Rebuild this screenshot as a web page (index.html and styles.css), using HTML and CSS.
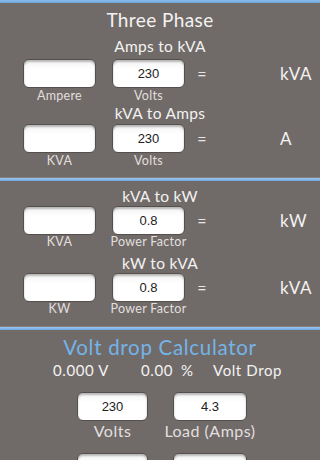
FILE: index.html
```html
<!DOCTYPE html>
<html>
<head>
<meta charset="utf-8">
<link rel="stylesheet" href="styles.css">
</head>
<body>
<div class="topbar"></div>
<section class="panel p1">
  <h1 class="title">Three Phase</h1>
  <h2 class="sub">Amps to kVA</h2>
  <div class="row">
    <div class="box"></div>
    <div class="box">230</div>
    <div class="eq">=</div>
    <div class="unit">kVA</div>
  </div>
  <div class="labels"><span>Ampere</span><span>Volts</span></div>
  <h2 class="sub s2">kVA to Amps</h2>
  <div class="row r2">
    <div class="box"></div>
    <div class="box">230</div>
    <div class="eq">=</div>
    <div class="unit">A</div>
  </div>
  <div class="labels"><span>KVA</span><span>Volts</span></div>
</section>
<div class="sep s1"></div>
<section class="panel p2">
  <h2 class="sub">kVA to kW</h2>
  <div class="row r3">
    <div class="box"></div>
    <div class="box">0.8</div>
    <div class="eq">=</div>
    <div class="unit">kW</div>
  </div>
  <div class="labels l0"><span>KVA</span><span>Power Factor</span></div>
  <h2 class="sub s3">kW to kVA</h2>
  <div class="row r3">
    <div class="box"></div>
    <div class="box">0.8</div>
    <div class="eq">=</div>
    <div class="unit">kVA</div>
  </div>
  <div class="labels l0"><span>KW</span><span>Power Factor</span></div>
</section>
<div class="sep s2"></div>
<section class="panel p3">
  <h1 class="vtitle">Volt drop Calculator</h1>
  <div class="stats"><span class="v">0.000 V</span><span class="pc">0.00</span><span class="pct">%</span><span class="vd">Volt Drop</span></div>
  <div class="vrow">
    <div class="box vb">230</div>
    <div class="box vb wide">4.3</div>
  </div>
  <div class="vlabels"><span>Volts</span><span class="wide">Load (Amps)</span></div>
  <div class="vrow vr2">
    <div class="box vb"></div>
    <div class="box vb wide"></div>
  </div>
</section>
</body>
</html>
```
FILE: styles.css
```css
html, body {
  margin: 0;
  padding: 0;
}
body {
  width: 320px;
  height: 460px;
  overflow: hidden;
  background: #706b69;
  font-family: "Lato", "DejaVu Sans", sans-serif;
  color: #f4f2f1;
}
.topbar {
  height: 3px;
  background: linear-gradient(#8cbcec, #6ea4dc);
}
.panel {
  display: flex;
  flex-direction: column;
}
.title {
  margin: 7px 0 0;
  height: 20px;
  line-height: 20px;
  font-size: 19px;
  font-weight: 400;
  text-align: center;
  letter-spacing: 0.4px;
}
.sub {
  margin: 7px 0 0;
  height: 18px;
  line-height: 18px;
  font-size: 15.5px;
  font-weight: 400;
  text-align: center;
  letter-spacing: 0.3px;
}
.p1 .sub.s2 { margin-top: 1px; }
.row {
  display: flex;
  align-items: center;
  padding-left: 23px;
  margin-top: 4px;
  height: 29px;
}
.row.r2 { margin-top: 2px; }
.row.r3 { margin-top: 1px; }
.row .box { width: 73px; }
.row .box + .box { margin-left: 16px; }
.box {
  box-sizing: border-box;
  height: 29px;
  background: linear-gradient(#f3f3f3, #ffffff 35%);
  border: 1px solid #55504e;
  border-radius: 6px;
  box-shadow: inset 0 2px 2px rgba(0,0,0,0.25);
  font-family: "Liberation Sans", Arial, sans-serif;
  font-size: 13px;
  color: #222;
  display: flex;
  align-items: center;
  justify-content: center;
}
.eq {
  width: 34px;
  text-align: center;
  font-size: 16px;
  color: #e8e6e5;
}
.unit {
  margin-left: 61px;
  font-size: 17px;
  letter-spacing: 0.6px;
  white-space: nowrap;
}
.labels {
  display: flex;
  gap: 16px;
  padding-left: 23px;
  margin-top: 1px;
  height: 14px;
  line-height: 14px;
  font-size: 12.5px;
  color: #e2dfde;
  letter-spacing: 0.3px;
}
.labels.l0 { margin-top: 0; }
.labels span {
  width: 73px;
  display: flex;
  justify-content: center;
  white-space: nowrap;
}
.sep {
  height: 3px;
  border-top: 1px solid #85807e;
  background: linear-gradient(#9cc8f2, #6fa6de);
}
.sep.s1 { margin-top: 9px; }
.sep.s2 { margin-top: 10px; }
.p2 .sub { margin-top: 6px; }
.p2 .sub.s3 { margin-top: 5px; }
.vtitle {
  margin: 5px 0 0;
  height: 24px;
  line-height: 24px;
  font-size: 20.5px;
  font-weight: 400;
  text-align: center;
  color: #74b4e8;
  letter-spacing: 0.7px;
}
.stats {
  display: flex;
  margin-top: 1px;
  height: 20px;
  line-height: 20px;
  font-size: 15px;
  padding-left: 53px;
  white-space: nowrap;
  letter-spacing: 0.6px;
}
.stats .v { width: 88px; }
.stats .pc { width: 40px; }
.stats .pct { width: 32px; }
.vrow {
  display: flex;
  gap: 25px;
  padding-left: 77px;
  margin-top: 12px;
}
.vb {
  width: 71px;
  height: 29px;
}
.vb.wide { width: 74px; }
.vlabels {
  display: flex;
  gap: 25px;
  padding-left: 77px;
  height: 20px;
  line-height: 20px;
  font-size: 16px;
  color: #e2dfde;
  letter-spacing: 0.5px;
}
.vlabels span {
  width: 71px;
  display: flex;
  justify-content: center;
  white-space: nowrap;
}
.vlabels span.wide { width: 74px; }
.vr2 { margin-top: 12px; }
```
